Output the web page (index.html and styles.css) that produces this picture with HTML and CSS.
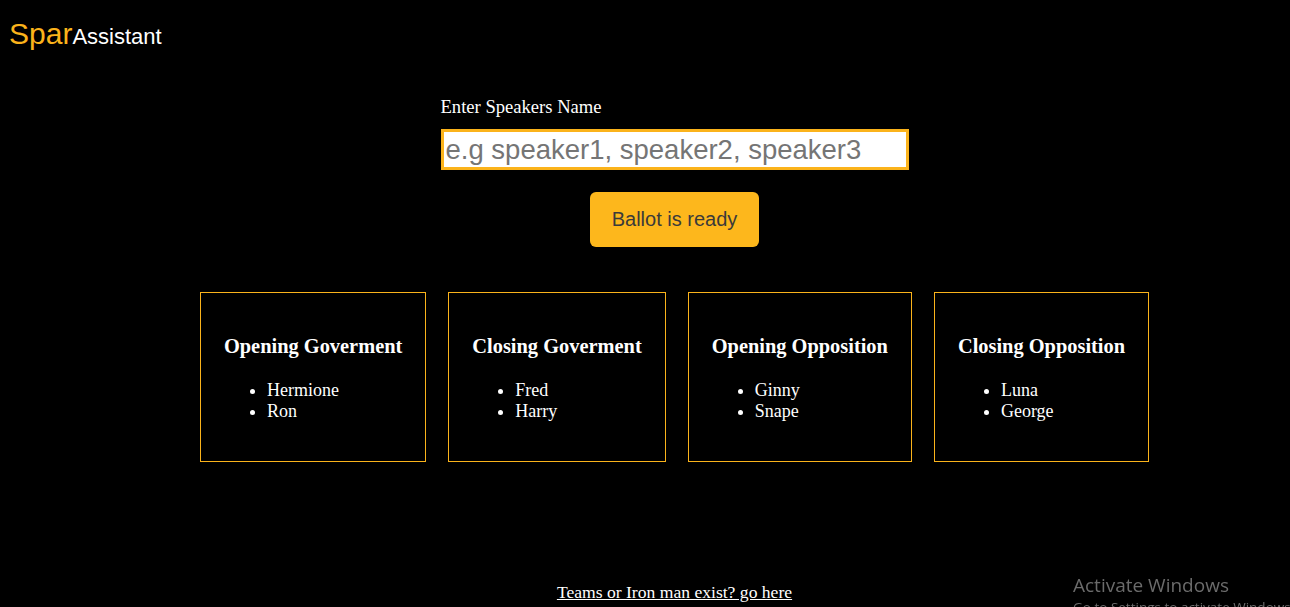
FILE: index.html
```html
<!DOCTYPE html>
<html lang="en">
<head>
<meta charset="utf-8">
<title>SparAssistant</title>
<link rel="stylesheet" href="styles.css">
</head>
<body>
<header class="header">
  <span class="brand-spar">Spar</span><span class="brand-assistant">Assistant</span>
</header>
<main class="main">
  <form class="speaker-form">
    <label class="speaker-label" for="speakers">Enter Speakers Name</label>
    <input class="speaker-input" id="speakers" type="text" placeholder="e.g speaker1, speaker2, speaker3">
  </form>
  <button class="ballot-btn" type="button">Ballot is ready</button>
  <section class="teams">
    <div class="team-card">
      <h3 class="team-title">Opening Goverment</h3>
      <ul class="team-list"><li>Hermione</li><li>Ron</li></ul>
    </div>
    <div class="team-card">
      <h3 class="team-title">Closing Goverment</h3>
      <ul class="team-list"><li>Fred</li><li>Harry</li></ul>
    </div>
    <div class="team-card">
      <h3 class="team-title">Opening Opposition</h3>
      <ul class="team-list"><li>Ginny</li><li>Snape</li></ul>
    </div>
    <div class="team-card">
      <h3 class="team-title">Closing Opposition</h3>
      <ul class="team-list"><li>Luna</li><li>George</li></ul>
    </div>
  </section>
  <footer class="footer">
    <a class="footer-link" href="#">Teams or Iron man exist? go here</a>
  </footer>
</main>
<div class="activate">
  <div class="activate-title">Activate Windows</div>
  <div class="activate-sub">Go to Settings to activate Windows.</div>
</div>
</body>
</html>
```
FILE: styles.css
```css
html, body {
  margin: 0;
  padding: 0;
  background: #000;
  color: #fff;
  font-family: "Liberation Serif", "Times New Roman", serif;
  overflow: hidden;
}

.header {
  padding: 18px 0 0 9px;
  height: 32px;
  line-height: 32px;
  font-family: "Liberation Sans", Arial, sans-serif;
}

.brand-spar {
  color: #fbb31b;
  font-size: 30px;
}

.brand-assistant {
  color: #fff;
  font-size: 22px;
}

.main {
  margin-left: 59px;
  display: flex;
  flex-direction: column;
  align-items: center;
}

.speaker-form {
  margin-top: 46px;
  width: 468px;
  display: flex;
  flex-direction: column;
  align-items: flex-start;
}

.speaker-label {
  font-size: 18.6px;
  line-height: 21px;
}

.speaker-input {
  margin-top: 12px;
  box-sizing: border-box;
  width: 468px;
  height: 41px;
  border: 3px solid #fbb31b;
  padding: 0 3px 0 2px;
  font-family: "Liberation Sans", Arial, sans-serif;
  font-size: 27.5px;
  color: #333;
  background: #fff;
  outline: none;
}

.speaker-input::placeholder {
  color: #757575;
}

.ballot-btn {
  margin-top: 22px;
  width: 169px;
  height: 55px;
  border: none;
  border-radius: 6px;
  background: #fdb71c;
  color: #3a3a3a;
  font-family: "Liberation Sans", Arial, sans-serif;
  font-size: 20px;
  padding: 0;
  cursor: pointer;
}

.teams {
  margin-top: 45px;
  display: flex;
  justify-content: center;
  gap: 22px;
}

.team-card {
  border: 1px solid #fbb31b;
  padding: 22px 23px 23px;
}

.team-title {
  margin: 20px 0;
  font-size: 20.4px;
  line-height: 23px;
  font-weight: bold;
  text-align: center;
  white-space: nowrap;
}

.team-list {
  margin: 22px 0 16px;
  padding-left: 43px;
  font-size: 18px;
  line-height: 21px;
}

.footer {
  margin-top: 120px;
  font-size: 17.6px;
  line-height: 21px;
}

.footer-link {
  color: #fff;
  text-decoration: underline;
}

.activate {
  position: fixed;
  left: 1073px;
  top: 572px;
  font-family: "Open Sans", "Noto Sans", sans-serif;
  color: #6b6b6b;
  white-space: nowrap;
}

.activate-title {
  font-size: 19px;
  line-height: 26px;
}

.activate-sub {
  font-size: 13.5px;
  line-height: 18px;
}
```
